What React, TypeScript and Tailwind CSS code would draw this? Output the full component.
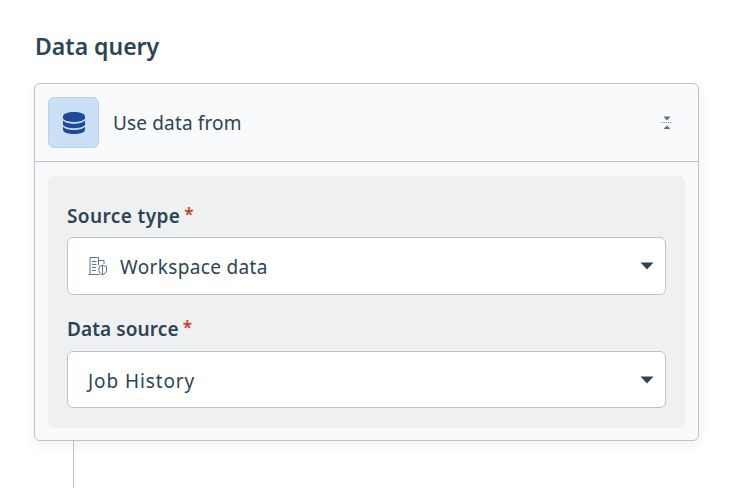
const font = { fontFamily: '"Noto Sans", sans-serif' };

function Caret() {
  return (
    <svg width="14" height="8" viewBox="0 0 14 8" className="shrink-0">
      <path d="M0.500 0.500h13L7 7.500z" fill="#2c4454" />
    </svg>
  );
}

function Select({ h, icon, label, track }: { h: string; icon?: boolean; label: string; track: string }) {
  return (
    <div className={`flex items-center bg-white border border-[#bcc3cb] rounded-[6px] pl-5 pr-[11px] ${h}`}>
      {icon && (
        <svg width="22" height="22" viewBox="0 0 22 22" fill="none" stroke="#5f7280" strokeWidth="1" className="mr-[11px] shrink-0 ml-[-1px]">
          <path d="M1.500 19.500h11M3 19.500V2.500h8.500V10M11.500 5.500h5.500V9" />
          <path d="M5 6.500h4.500M5 9.500h4.500M5 12.500h4M5 15.500h4" />
          <path d="M12 11.500l3.500-1.200 4 1.200v4c0 2.200-2 3.500-4 4.200-2-.7-3.500-2-3.500-4.200z" />
          <path d="M15.500 10.500v9" />
        </svg>
      )}
      <span className={`flex-1 pt-[3px] text-[19px] text-[#2c4454] ${track}`}>{label}</span>
      <Caret />
    </div>
  );
}

function Label({ children, track }: { children: string; track: string }) {
  return (
    <div className={`flex items-start text-[19px] leading-[24px] font-semibold text-[#2c4454] h-[24px] ${track}`}>
      {children}
      <span className="text-[#c8402a] ml-[4px] text-[17px] leading-[22px]">*</span>
    </div>
  );
}

export default function App() {
  return (
    <div style={font} className="w-[732px] h-[488px] bg-white overflow-hidden pt-[32px] px-[34px]">
      <h1 className="text-[23px] leading-[28px] font-semibold text-[#2c4454] h-[28px] ml-[1px]">Data query</h1>
      <div className="mt-[23px] w-[665px] h-[358px] rounded-[6px] border border-[#bcc3cb] bg-[#f9fafc] shadow-[0_4px_12px_rgba(30,40,60,0.07)] flex flex-col">
        <div className="h-[78px] shrink-0 flex items-center border-b border-[#bcc3cb] pl-[13px] pr-[25px]">
          <div className="w-[51px] h-[51px] rounded-[6px] bg-[#cbe0f5] border border-[#b9d3ee] flex items-center justify-center">
            <svg width="24" height="24" viewBox="0 0 24 24">
              <path d="M1 5.500C1 2.500 6 1 12 1s11 1.500 11 4.500v2.300C21 10 16.500 11 12 11S3 10 1 7.800z" fill="#1f4a9c" />
              <path d="M1 9.600C3 11.800 7.500 12.800 12 12.800s9-1 11-3.200v4.400C21 16.200 16.500 17.200 12 17.200S3 16.200 1 14z" fill="#1f4a9c" />
              <path d="M1 15.800C3 18 7.500 19 12 19s9-1 11-3.200v2.700C23 21.500 18 23 12 23S1 21.500 1 18.500z" fill="#1f4a9c" />
            </svg>
          </div>
          <span className="ml-[14px] pt-[2px] flex-1 text-[19px] text-[#2c4454] tracking-[0.15px]">Use data from</span>
          <svg width="12" height="14" viewBox="0 0 12 14" className="shrink-0">
            <path d="M2.500 0.500h7L6 4.500z" fill="#5f7280" />
            <path d="M2.500 13h7L6 9.500z" fill="#5f7280" />
            <path d="M0.500 6.500h11" stroke="#5f7280" strokeWidth="1" strokeDasharray="1 1.200" />
          </svg>
        </div>
        <div className="mx-[13px] mt-[14px] h-[252px] rounded-[6px] bg-[#eff0f2] px-[19px] pt-[28px]">
          <Label track="tracking-[0.4px]">Source type</Label>
          <div className="mt-[9px]">
            <Select h="h-[58px]" icon label="Workspace data" track="tracking-[0.35px]" />
          </div>
          <div className="mt-[22px]">
            <Label track="tracking-[0.1px]">Data source</Label>
          </div>
          <div className="mt-[10px]">
            <Select h="h-[57px]" label="Job History" track="tracking-[0.9px]" />
          </div>
        </div>
      </div>
      <div className="ml-[39px] w-px h-[47px] bg-[#bcc3cb]" />
    </div>
  );
}
